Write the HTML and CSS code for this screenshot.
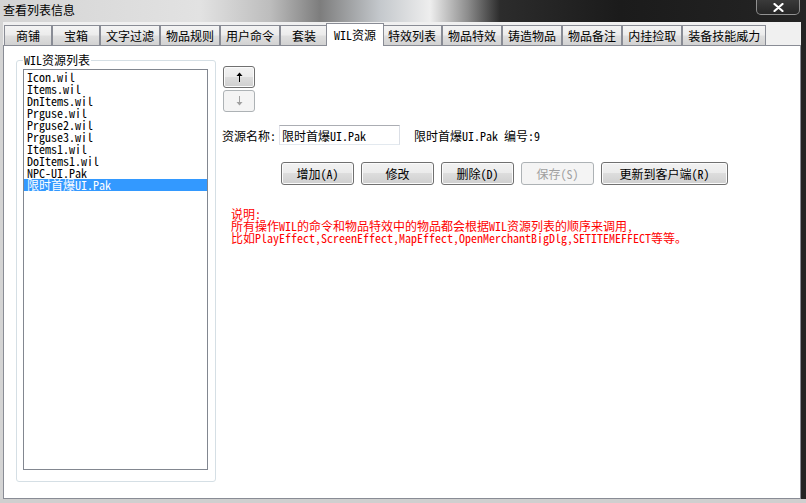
FILE: index.html
```html
<!DOCTYPE html>
<html lang="zh-CN">
<head>
    <meta charset="UTF-8">
    <title>查看列表信息</title>
    <link rel="stylesheet" href="styles.css">
</head>
<body>
    <div class="window">
        <!-- Barre de titre -->
        <div class="titlebar">
            <span class="title">查看列表信息</span>
            <div class="close-btn">
                <svg width="11" height="9" viewBox="0 0 11 9">
                    <path d="M1.5 1 L9.5 8 M9.5 1 L1.5 8" stroke="#fff" stroke-width="2.2" stroke-linecap="round"/>
                </svg>
            </div>
        </div>

        <div class="client">
            <!-- Onglets -->
            <div class="tabs">
                <div class="tab">商铺</div>
                <div class="tab">宝箱</div>
                <div class="tab">文字过滤</div>
                <div class="tab">物品规则</div>
                <div class="tab">用户命令</div>
                <div class="tab">套装</div>
                <div class="tab active">WIL资源</div>
                <div class="tab">特效列表</div>
                <div class="tab">物品特效</div>
                <div class="tab">铸造物品</div>
                <div class="tab">物品备注</div>
                <div class="tab">内挂捡取</div>
                <div class="tab">装备技能威力</div>
            </div>

            <div class="tab-panel">
                <!-- Liste des ressources -->
                <fieldset class="group">
                    <legend>WIL资源列表</legend>
                    <ul class="listbox">
                        <li>Icon.wil</li>
                        <li>Items.wil</li>
                        <li>DnItems.wil</li>
                        <li>Prguse.wil</li>
                        <li>Prguse2.wil</li>
                        <li>Prguse3.wil</li>
                        <li>Items1.wil</li>
                        <li>DoItems1.wil</li>
                        <li>NPC-UI.Pak</li>
                        <li class="selected">限时首爆UI.Pak</li>
                    </ul>
                </fieldset>

                <!-- Zone d'édition -->
                <div class="editor">
                    <div class="move-btns">
                        <button class="btn arrow-btn">
                            <svg width="7" height="10" viewBox="0 0 7 10">
                                <path d="M3.5 0.5 L6.5 4 L0.5 4 Z" fill="#000"/>
                                <path d="M3.5 3 V10" stroke="#000" stroke-width="1"/>
                            </svg>
                        </button>
                        <button class="btn arrow-btn" disabled>
                            <svg width="7" height="10" viewBox="0 0 7 10">
                                <path d="M3.5 9.5 L6.5 6 L0.5 6 Z" fill="#a0a0a0"/>
                                <path d="M3.5 0 V7" stroke="#a0a0a0" stroke-width="1"/>
                            </svg>
                        </button>
                    </div>

                    <div class="name-row">
                        <label class="name-label">资源名称:</label>
                        <input type="text" class="name-input" value="限时首爆UI.Pak" readonly>
                        <span class="name-info">限时首爆UI.Pak 编号:9</span>
                    </div>

                    <div class="action-row">
                        <button class="btn action-btn">增加(A)</button>
                        <button class="btn action-btn">修改</button>
                        <button class="btn action-btn">删除(D)</button>
                        <button class="btn action-btn" disabled>保存(S)</button>
                        <button class="btn action-btn wide">更新到客户端(R)</button>
                    </div>

                    <div class="note">
                        说明:<br>
                        所有操作WIL的命令和物品特效中的物品都会根据WIL资源列表的顺序来调用,<br>
                        比如PlayEffect,ScreenEffect,MapEffect,OpenMerchantBigDlg,SETITEMEFFECT等等。
                    </div>
                </div>
            </div>
        </div>
    </div>
</body>
</html>
```

FILE: styles.css
```css
body {
    margin: 0;
    width: 806px;
    height: 503px;
    overflow: hidden;
    background: #1c1c1c;
    font-family: "Noto Sans Mono CJK SC", "Noto Sans CJK SC", "Liberation Mono", monospace;
    font-size: 12px;
    color: #000;
}

.window {
    height: 503px;
    box-sizing: border-box;
    border-bottom: 4px solid #cfcfcf;
    background: linear-gradient(to right,
        #d4d4d4 0, #e2e2e2 200px, #bdbdbd 270px, #7d7d7d 320px,
        #c4c8cc 380px, #eeeeee 430px, #8c8c8c 468px, #2c2c2c 500px,
        #1b1b1b 620px, #242424 806px);
}

/* Barre de titre */
.titlebar {
    height: 22px;
    display: flex;
    justify-content: space-between;
    align-items: flex-start;
}

.title {
    padding: 3px 0 0 3px;
    line-height: 14px;
    font-size: 12px;
}

.close-btn {
    width: 44px;
    height: 15px;
    margin-right: 6px;
    box-sizing: border-box;
    border: 1px solid rgba(220, 220, 220, 0.55);
    border-top: none;
    border-radius: 0 0 5px 5px;
    background: linear-gradient(#3a3a3a, #262626);
    display: flex;
    align-items: center;
    justify-content: center;
}

/* Zone cliente */
.client {
    margin: 0 5px 0 3px;
    height: 477px;
    background: #f0f0f0;
    display: flex;
    flex-direction: column;
}

.tabs {
    height: 23px;
    padding-left: 1px;
    display: flex;
    align-items: flex-end;
    position: relative;
    z-index: 1;
}

.tab {
    height: 20px;
    min-width: 48px;
    box-sizing: border-box;
    padding: 0 5px;
    border: 1px solid #898c95;
    border-bottom: none;
    background: linear-gradient(#f4f4f4 0%, #ececec 45%, #dedede 55%, #d2d2d2 100%);
    line-height: 19px;
    text-align: center;
    white-space: nowrap;
}

.tab.active {
    height: 23px;
    margin: 0 -2px -1px;
    padding: 0 7px;
    background: #fff;
    line-height: 21px;
    position: relative;
}

.tab-panel {
    flex: 1;
    background: #fff;
    border: 1px solid #898c95;
    padding: 8px 0 0 12px;
    display: flex;
    align-items: flex-start;
}

/* Cadre de la liste */
.group {
    margin: 0;
    padding: 3px 7px 11px 6px;
    border: 1px solid #d5dfe5;
    border-radius: 3px;
    min-width: 0;
}

.group legend {
    padding: 0 1px;
    line-height: 12px;
}

.listbox {
    list-style: none;
    margin: 0;
    padding: 1px 0 0;
    width: 185px;
    height: 401px;
    box-sizing: border-box;
    border: 1px solid #828790;
}

.listbox li {
    height: 12px;
    line-height: 12px;
    padding-left: 3px;
    white-space: nowrap;
}

.listbox li.selected {
    background: #3399ff;
    color: #fff;
}

/* Zone d'édition */
.editor {
    margin-left: 6px;
    padding-top: 12px;
}

.btn {
    font-family: inherit;
    font-size: 12px;
    color: #000;
    padding: 0;
    box-sizing: border-box;
    border: 1px solid #707070;
    border-radius: 3px;
    background: linear-gradient(#f2f2f2 0%, #ebebeb 49%, #dddddd 50%, #cfcfcf 100%);
    box-shadow: inset 0 0 0 1px #fbfbfb;
}

.btn:disabled {
    border-color: #adb2b5;
    background: #f4f4f4;
    box-shadow: none;
    color: #a0a0a0;
}

.move-btns {
    display: flex;
    flex-direction: column;
    gap: 2px;
    margin-left: 1px;
}

.arrow-btn {
    width: 32px;
    height: 22px;
    display: flex;
    align-items: center;
    justify-content: center;
}

.name-row {
    margin-top: 13px;
    display: flex;
    align-items: center;
    height: 20px;
}

.name-label {
    width: 57px;
}

.name-input {
    width: 121px;
    height: 20px;
    box-sizing: border-box;
    margin: 0;
    padding: 0 2px;
    border: 1px solid;
    border-color: #abadb3 #dbdfe6 #e3e9ef #e2e3ea;
    font-family: inherit;
    font-size: 12px;
    color: #000;
    outline: none;
}

.name-info {
    margin-left: 14px;
}

.action-row {
    margin: 17px 0 0 59px;
    display: flex;
    gap: 7px;
}

.action-btn {
    width: 73px;
    height: 23px;
}

.action-btn.wide {
    width: 127px;
}

.note {
    margin: 23px 0 0 9px;
    color: #f00;
    line-height: 12px;
    white-space: nowrap;
}
```
